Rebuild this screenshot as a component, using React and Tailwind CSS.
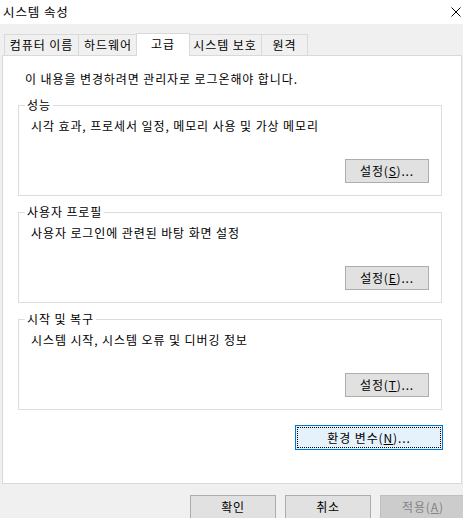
import React from 'react'

const font = { fontFamily: '"Noto Sans CJK KR", "Noto Sans", sans-serif' }

function Btn({ children, className = '' }) {
  return (
    <button
      className={`flex h-[24px] items-center justify-center border border-[#adadad] bg-[#e1e1e1] text-[12px] leading-[16px] tracking-[0.8px] text-black ${className}`}
    >
      {children}
    </button>
  )
}

function Group({ title, desc, btn, className = '' }) {
  return (
    <div className={`relative ml-[15px] h-[91px] w-[424px] border border-[#dcdcdc] px-[12px] pt-[12px] ${className}`}>
      <span className="absolute -top-[9px] left-[6px] bg-white px-[2px] text-[12px] leading-[16px]">{title}</span>
      <p className="text-[12px] leading-[16px]">{desc}</p>
      <div className="mt-[25px] flex justify-end">
        <Btn className="w-[84px]">{btn}</Btn>
      </div>
    </div>
  )
}

const tabs = [
  { label: '컴퓨터 이름', w: 'w-[75px]' },
  { label: '하드웨어', w: 'w-[59px]' },
  { label: '고급', w: 'w-[54px]', active: true },
  { label: '시스템 보호', w: 'w-[73px]' },
  { label: '원격', w: 'w-[46px]' },
]

export default function App() {
  return (
    <div className="h-[518px] w-[463px] overflow-hidden bg-[#f0f0f0] tracking-[0.9px] text-black" style={font}>
      <div className="flex h-[24px] items-center justify-between bg-white pl-[3px] pr-[1px]">
        <span className="text-[12.5px] leading-[16px]">시스템 속성</span>
        <svg width="10" height="10" viewBox="0 0 10 10" className="mr-[1px]">
          <path d="M0.5 0.5 L9.5 9.5 M9.5 0.5 L0.5 9.5" stroke="#000" strokeWidth="1" />
        </svg>
      </div>

      <div className="mt-[9px] flex h-[22px] items-end pl-[4px]">
        {tabs.map((t, i) =>
          t.active ? (
            <div
              key={t.label}
              className={`relative z-10 -mb-px -ml-[2px] flex h-[23px] items-start justify-center border-x border-t border-[#d9d9d9] bg-white pt-[2px] text-[12px] leading-[16px] ${t.w}`}
            >
              {t.label}
            </div>
          ) : (
            <div
              key={t.label}
              className={`flex h-[21px] items-center justify-center border-t border-r border-[#d9d9d9] bg-[#f0f0f0] text-[12px] leading-[16px] ${i === 0 ? 'border-l' : ''} ${i === 3 ? '-ml-[1px]' : ''} ${t.w}`}
            >
              {t.label}
            </div>
          )
        )}
      </div>

      <div className="ml-[2px] h-[429px] w-[460px] border border-[#d9d9d9] bg-white pt-[15px]">
        <p className="pl-[22px] text-[12px] leading-[16px]">이 내용을 변경하려면 관리자로 로그온해야 합니다.</p>
        <Group
          className="mt-[18px]"
          title="성능"
          desc="시각 효과, 프로세서 일정, 메모리 사용 및 가상 메모리"
          btn={<span>설정(<u>S</u>)...</span>}
        />
        <Group
          className="mt-[16px]"
          title="사용자 프로필"
          desc="사용자 로그인에 관련된 바탕 화면 설정"
          btn={<span>설정(<u>E</u>)...</span>}
        />
        <Group
          className="mt-[16px]"
          title="시작 및 복구"
          desc="시스템 시작, 시스템 오류 및 디버깅 정보"
          btn={<span>설정(<u>T</u>)...</span>}
        />
        <div className="mt-[15px] flex justify-end pr-[18px]">
          <button className="relative flex h-[25px] w-[148px] items-center justify-center border border-[#0078d7] bg-[#e5f1fb] text-[12px] leading-[16px]">
            <span className="absolute inset-[1px] border border-dotted border-black" />
            <span>환경 변수(<u>N</u>)...</span>
          </button>
        </div>
      </div>

      <div className="mt-[11px] flex gap-[9px] pl-[190px]">
        <Btn className="w-[86px] shrink-0">확인</Btn>
        <Btn className="w-[86px] shrink-0">취소</Btn>
        <button className="flex h-[24px] w-[86px] shrink-0 items-center justify-center border border-[#bfbfbf] bg-[#cccccc] text-[12px] leading-[16px] text-[#838383]">
          적용(<u>A</u>)
        </button>
      </div>
    </div>
  )
}
